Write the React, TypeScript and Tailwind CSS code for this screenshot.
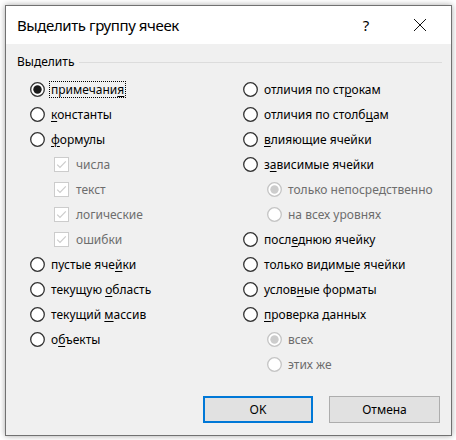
import React from "react";

const font = { fontFamily: '"Noto Sans", "Segoe UI", sans-serif' };

function Radio({ checked = false, disabled = false }: { checked?: boolean; disabled?: boolean }) {
  const stroke = disabled ? "#c4c4c4" : "#333333";
  const dot = disabled ? "#cccccc" : "#1a1a1a";
  return (
    <svg width="15" height="15" viewBox="0 0 15 15" className="shrink-0">
      <circle cx="7.5" cy="7.5" r="6.8" fill="#ffffff" stroke={stroke} strokeWidth="1.3" />
      {checked && <circle cx="7.5" cy="7.5" r="4.2" fill={dot} />}
    </svg>
  );
}

function Check() {
  return (
    <svg width="15" height="15" viewBox="0 0 15 15" className="shrink-0">
      <rect x="0.5" y="0.5" width="14" height="14" fill="#ffffff" stroke="#cccccc" strokeWidth="1" />
      <path d="M3.2 7.6 L6 10.4 L11.8 4.4" fill="none" stroke="#cccccc" strokeWidth="1.2" />
    </svg>
  );
}

type Part = string | { u: string };

function Label({ parts, disabled = false }: { parts: Part[]; disabled?: boolean }) {
  return (
    <span className={disabled ? "text-[#6d6d6d]" : "text-black"}>
      {parts.map((p, i) =>
        typeof p === "string" ? (
          <React.Fragment key={i}>{p}</React.Fragment>
        ) : (
          <span key={i} className="underline decoration-1 underline-offset-[2px]">
            {p.u}
          </span>
        )
      )}
    </span>
  );
}

function RadioRow({
  parts,
  checked,
  disabled,
  indent,
  focus,
}: {
  parts: Part[];
  checked?: boolean;
  disabled?: boolean;
  indent?: boolean;
  focus?: boolean;
}) {
  return (
    <div className={"flex items-center h-[25px] " + (indent ? "pl-[24px]" : "")}>
      <Radio checked={checked} disabled={disabled} />
      {focus ? (
        <span className="ml-[4px] px-[1px] h-[17px] flex items-center border border-dotted border-black">
          <Label parts={parts} disabled={disabled} />
        </span>
      ) : (
        <span className="ml-[6px]">
          <Label parts={parts} disabled={disabled} />
        </span>
      )}
    </div>
  );
}

function CheckRow({ text }: { text: string }) {
  return (
    <div className="flex items-center h-[25px] pl-[24px]">
      <Check />
      <span className="ml-[7px]">
        <Label parts={[text]} disabled />
      </span>
    </div>
  );
}

export default function App() {
  return (
    <div className="w-[456px] h-[440px] bg-white p-[5px]" style={font}>
      <div className="w-[447px] h-[431px] border border-[#717171] bg-[#f0f0f0] flex flex-col shadow-[0_0_6px_rgba(0,0,0,0.35)] text-[12px] leading-[16px]">
        <div className="h-[38px] bg-white flex items-center pl-[11px] shrink-0">
          <span className="text-[15px] tracking-[-0.4px] text-black leading-[20px] flex-1">Выделить группу ячеек</span>
          <span className="w-[20px] text-center text-[15px] text-black mr-[34px]">?</span>
          <span className="w-[20px] flex justify-center mr-[21px]">
            <svg width="14" height="14" viewBox="0 0 14 14">
              <path d="M1 1 L13 13 M13 1 L1 13" stroke="#111" strokeWidth="1" />
            </svg>
          </span>
        </div>
        <div className="flex-1 flex flex-col pl-[11px] pr-[9px] pt-[10px]">
          <div className="flex items-center h-[16px]">
            <span className="text-black">Выделить</span>
            <div className="flex-1 h-px bg-[#dcdcdc] ml-[5px]" />
          </div>
          <div className="flex mt-[7px] ml-[13px]">
            <div className="w-[213px] flex flex-col">
              <RadioRow parts={["примечани", { u: "я" }]} checked focus />
              <RadioRow parts={[{ u: "к" }, "онстанты"]} />
              <RadioRow parts={[{ u: "ф" }, "ормулы"]} />
              <CheckRow text="числа" />
              <CheckRow text="текст" />
              <CheckRow text="логические" />
              <CheckRow text="ошибки" />
              <RadioRow parts={["пустые яче", { u: "й" }, "ки"]} />
              <RadioRow parts={["текущую ", { u: "о" }, "бласть"]} />
              <RadioRow parts={["текущий ", { u: "м" }, "ассив"]} />
              <RadioRow parts={["о", { u: "б" }, "ъекты"]} />
            </div>
            <div className="flex-1 flex flex-col">
              <RadioRow parts={["отличия по ст", { u: "р" }, "окам"]} />
              <RadioRow parts={["отличия по столб", { u: "ц" }, "ам"]} />
              <RadioRow parts={[{ u: "в" }, "лияющие ячейки"]} />
              <RadioRow parts={["з", { u: "а" }, "висимые ячейки"]} />
              <RadioRow parts={["только непосредственно"]} indent disabled checked />
              <RadioRow parts={["на всех уровнях"]} indent disabled />
              <RadioRow parts={["посл", { u: "е" }, "днюю ячейку"]} />
              <RadioRow parts={["только видим", { u: "ы" }, "е ячейки"]} />
              <RadioRow parts={["услов", { u: "н" }, "ые форматы"]} />
              <RadioRow parts={[{ u: "п" }, "роверка данных"]} />
              <RadioRow parts={["всех"]} indent disabled checked />
              <RadioRow parts={["этих же"]} indent disabled />
            </div>
          </div>
          <div className="flex justify-end gap-[16px] mt-[19px] mr-[2px]">
            <button className="w-[110px] h-[27px] bg-[#e1e1e1] border-2 border-[#0078d7] text-black text-[12px]">
              OK
            </button>
            <button className="w-[111px] h-[27px] bg-[#e1e1e1] border border-[#adadad] text-black text-[12px]">
              Отмена
            </button>
          </div>
        </div>
      </div>
    </div>
  );
}
